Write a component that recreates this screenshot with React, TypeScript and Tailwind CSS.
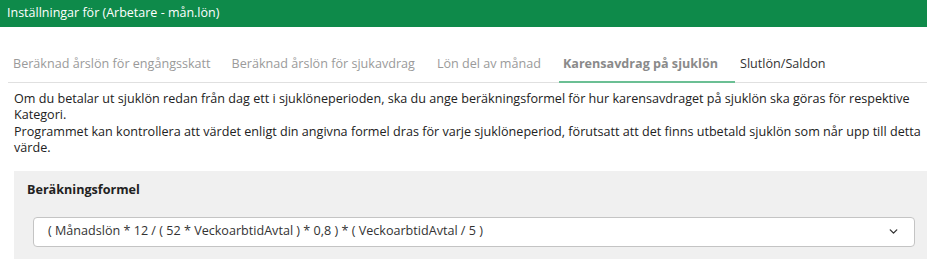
import { ChevronDown } from 'lucide-react';

const TABS = [
  'Beräknad årslön för engångsskatt',
  'Beräknad årslön för sjukavdrag',
  'Lön del av månad',
  'Karensavdrag på sjuklön',
  'Slutlön/Saldon',
];

const ACTIVE = 3;

export default function App() {
  return (
    <div
      className="min-h-[259px] bg-white text-[12.6px] text-[#333]"
      style={{ fontFamily: '"Open Sans", "Liberation Sans", sans-serif' }}
    >
      {/* Title bar */}
      <div className="flex h-[27px] items-center bg-[#0e8a4a] px-[7px] text-[12.5px] text-white">
        Inställningar för (Arbetare - mån.lön)
      </div>

      {/* Tabs */}
      <div className="ml-[8px] mt-[20px] flex border-b border-[#e0e0e0]">
        {TABS.map((tab, i) => {
          const active = i === ACTIVE;
          const last = i === TABS.length - 1;
          return (
            <button
              key={tab}
              type="button"
              className={`-mb-px flex h-[36px] items-center whitespace-nowrap border-b-2 ${
                active
                  ? 'ml-[13px] border-[#6bbf94] pl-[4px] pr-[17px] font-bold text-[#8a8a8a]'
                  : 'border-transparent px-[5px]'
              } ${i === 1 ? 'ml-[11px]' : ''} ${i === 2 ? 'ml-[12px]' : ''} ${
                last ? 'text-[#333]' : active ? '' : 'text-[#9a9a9a]'
              }`}
            >
              {tab}
            </button>
          );
        })}
      </div>

      {/* Description */}
      <div className="pl-[14px] pr-[4px] pt-[8px] leading-[16.4px] text-[#222]">
        <p>
          Om du betalar ut sjuklön redan från dag ett i sjuklöneperioden, ska du ange beräkningsformel för hur
          karensavdraget på sjuklön ska göras för respektive Kategori.
        </p>
        <p>
          Programmet kan kontrollera att värdet enligt din angivna formel dras för varje sjuklöneperiod, förutsatt
          att det finns utbetald sjuklön som når upp till detta värde.
        </p>
      </div>

      {/* Formula panel */}
      <div className="ml-[14px] mt-[14px] bg-[#f0f0f0] pb-[14px] pt-[10px]">
        <div className="pl-[13px] font-bold leading-[18px] text-[#222]">Beräkningsformel</div>
        <div className="ml-[19px] mr-[12px] mt-[18px] flex h-[30px] items-center justify-between rounded-[4px] border border-[#c4c4c4] bg-white pl-[14px] pr-[14px] text-[#333]">
          <span>( Månadslön * 12 / ( 52 * VeckoarbtidAvtal ) * 0,8 ) * ( VeckoarbtidAvtal / 5 )</span>
          <ChevronDown className="h-[13px] w-[13px] text-[#333]" strokeWidth={2.5} />
        </div>
      </div>
    </div>
  );
}
